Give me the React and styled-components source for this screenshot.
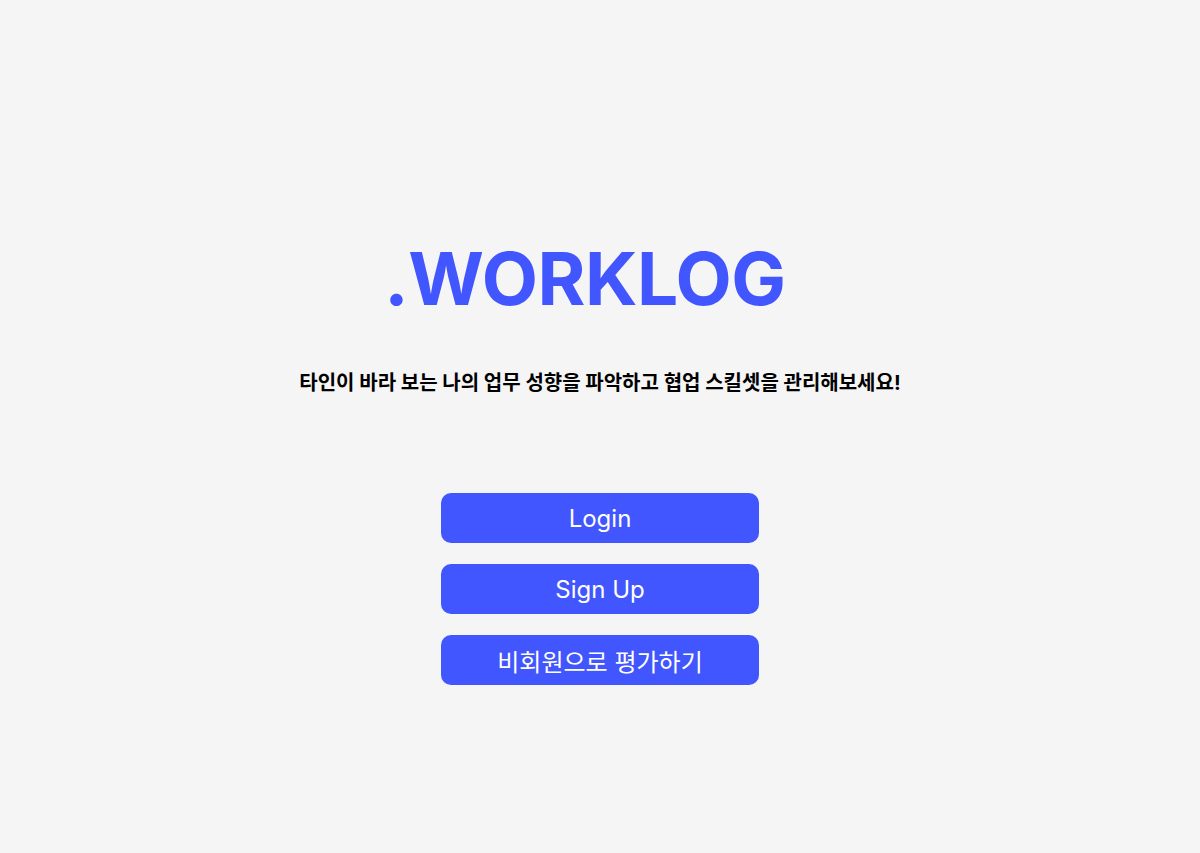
import React from 'react';
import styled, { createGlobalStyle } from 'styled-components';

const GlobalStyle = createGlobalStyle`
  html, body {
    margin: 0;
    padding: 0;
    background: #f5f5f5;
  }
  body {
    font-family: Inter, "Noto Sans CJK KR", sans-serif;
  }
`;

const Page = styled.div`
  width: 1200px;
  height: 853px;
  display: flex;
  flex-direction: column;
  align-items: center;
  box-sizing: border-box;
  padding-top: 234px;
`;

const Logo = styled.h1`
  margin: 0 30px 0 0;
  font-family: Inter, sans-serif;
  font-weight: 700;
  font-size: 73px;
  line-height: 90px;
  color: #4256ff;
  letter-spacing: -0.5px;
`;

const Tagline = styled.p`
  margin: 45px 0 0;
  font-family: Inter, "Noto Sans CJK KR", sans-serif;
  font-weight: 700;
  font-size: 20px;
  line-height: 28px;
  color: #000;
`;

const ButtonList = styled.div`
  margin-top: 96px;
  display: flex;
  flex-direction: column;
  gap: 21px;
`;

const Button = styled.button`
  width: 318px;
  height: 50px;
  border: none;
  border-radius: 10px;
  background: #4256ff;
  color: #fff;
  font-family: Inter, "Noto Sans CJK KR", sans-serif;
  font-size: 24px;
  font-weight: 400;
  cursor: pointer;
`;

export default function App() {
  return (
    <>
      <GlobalStyle />
      <Page>
        <Logo>.WORKLOG</Logo>
        <Tagline>타인이 바라 보는 나의 업무 성향을 파악하고 협업 스킬셋을 관리해보세요!</Tagline>
        <ButtonList>
          <Button>Login</Button>
          <Button>Sign Up</Button>
          <Button>비회원으로 평가하기</Button>
        </ButtonList>
      </Page>
    </>
  );
}
